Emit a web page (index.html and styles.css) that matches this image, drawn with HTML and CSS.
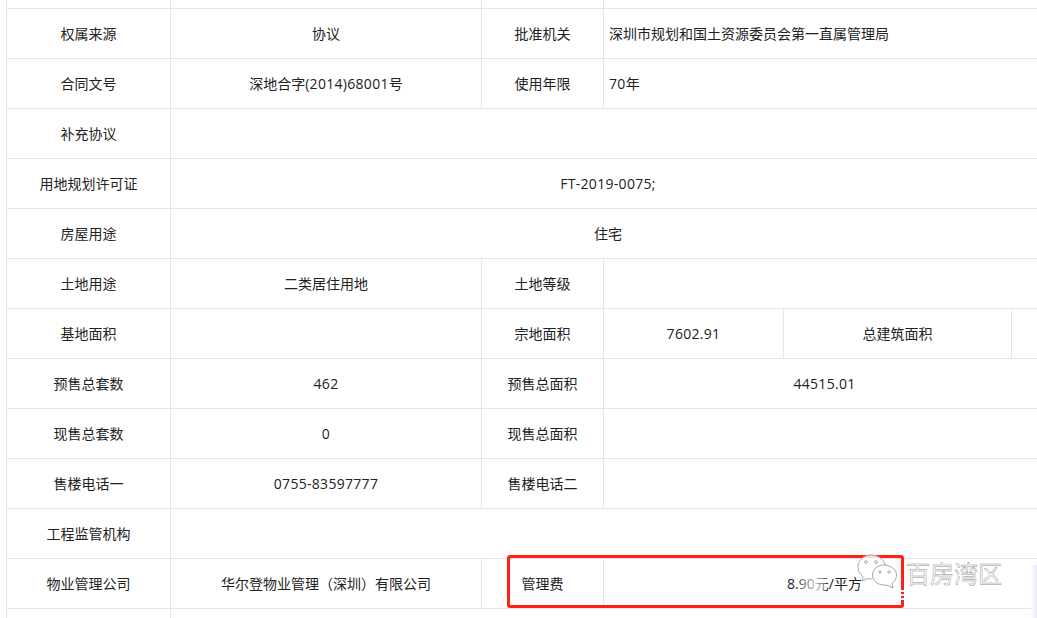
FILE: index.html
```html
<!DOCTYPE html>
<html lang="zh-CN">
<head>
<meta charset="utf-8">
<title>项目信息</title>
<link rel="stylesheet" href="styles.css">
</head>
<body>
<main class="sheet">
<table class="info">
<colgroup>
<col class="c1"><col class="c2"><col class="c3"><col class="c4"><col class="c5"><col class="c6">
</colgroup>
<tbody>
<tr class="cut"><td></td><td></td><td></td><td colspan="3"></td></tr>
<tr><td>权属来源</td><td>协议</td><td>批准机关</td><td colspan="3" class="left">深圳市规划和国土资源委员会第一直属管理局</td></tr>
<tr><td>合同文号</td><td>深地合字<span class="num">(2014)68001</span>号</td><td>使用年限</td><td colspan="3" class="left"><span class="num">70</span>年</td></tr>
<tr><td>补充协议</td><td colspan="5"></td></tr>
<tr><td>用地规划许可证</td><td colspan="5" class="num">FT-2019-0075;</td></tr>
<tr><td>房屋用途</td><td colspan="5">住宅</td></tr>
<tr><td>土地用途</td><td>二类居住用地</td><td>土地等级</td><td colspan="3"></td></tr>
<tr><td>基地面积</td><td></td><td>宗地面积</td><td class="num">7602.91</td><td>总建筑面积</td><td></td></tr>
<tr><td>预售总套数</td><td class="num">462</td><td>预售总面积</td><td colspan="3" class="num">44515.01</td></tr>
<tr><td>现售总套数</td><td class="num">0</td><td>现售总面积</td><td colspan="3"></td></tr>
<tr><td>售楼电话一</td><td class="num">0755-83597777</td><td>售楼电话二</td><td colspan="3"></td></tr>
<tr><td>工程监管机构</td><td colspan="5"></td></tr>
<tr><td>物业管理公司</td><td>华尔登物业管理（深圳）有限公司</td><td>管理费</td><td colspan="3">8.90元/平方</td></tr>
<tr><td></td><td colspan="5"></td></tr>
</tbody>
</table>
<div class="mark-box"></div>
<div class="wm-fade"></div>
<div class="wm-break"></div>
<div class="edge-shade"></div>
<div class="watermark">
<svg class="wx" viewBox="0 0 40 36" width="40" height="36" aria-hidden="true">
<path class="wx-glow" d="M14 1C6.500 1 1 6.500 1 13c0 4 2 7.500 5 9.500L5 27l5.500-2.500 4 .5c7 0 13-5 13-12S21.500 1 14 1z"/>
<path class="wx-line" d="M14 1C6.500 1 1 6.500 1 13c0 4 2 7.500 5 9.500L5 27l5.500-2.500 4 .5"/>
<path class="wx-line" d="M14 1c7 0 12.500 4 14 10"/>
<path class="wx-glow" d="M27 11c-6.500 0-11.500 4.500-11.500 10S20.500 31 27 31l4 .5 5 2.500-1-4.500c2.800-2 4.500-5 4.500-8.500C39.500 15.500 33.500 11 27 11z"/>
<path class="wx-line" d="M27 11c-6.500 0-11.500 4.500-11.500 10S20.500 31 27 31l4 .5 5 2.500-1-4.500c2.800-2 4.500-5 4.500-8.500C39.500 15.500 33.500 11 27 11z"/>
<circle class="wx-dot" cx="9" cy="8" r="1.400"/><circle class="wx-dot" cx="19" cy="8" r="1.400"/>
<circle class="wx-dot" cx="23" cy="18" r="1.200"/><circle class="wx-dot" cx="32" cy="18" r="1.200"/>
</svg>
<span class="wm-text">百房湾区</span>
</div>
</main>
</body>
</html>
```
FILE: styles.css
```css
* { box-sizing: border-box; }
html, body { margin: 0; padding: 0; background: #fff; overflow: hidden; }
body { width: 1037px; height: 618px; }
.sheet { position: relative; width: 1037px; height: 618px; overflow: hidden; padding-left: 6px; }
.info {
  border-collapse: collapse;
  table-layout: fixed;
  width: 1039px;
  font: 14px/20px "Open Sans", "Noto Sans CJK SC", "Liberation Sans", sans-serif;
  color: #222;
}
.c1 { width: 164px; }
.c2 { width: 311px; }
.c3 { width: 122px; }
.c4 { width: 180px; }
.c5 { width: 228px; }
.c6 { width: 34px; }
.info tr { height: 50px; }
.info tr.cut { height: 8px; }
.info td {
  border: 1px solid #e6e6e6;
  text-align: center;
  vertical-align: middle;
  padding: 2px 5px 0;
  overflow: hidden;
  white-space: nowrap;
}
.info tr.cut td { border-top: 0; padding: 0; }
.info td.left { text-align: left; }
.num { letter-spacing: .3px; }
.mark-box {
  position: absolute;
  left: 507px;
  top: 555px;
  width: 397px;
  height: 53px;
  border: 3px solid #ff2116;
  border-radius: 3px;
}
.wm-fade {
  position: absolute;
  left: 800px;
  top: 575px;
  width: 26px;
  height: 18px;
  background: linear-gradient(90deg, rgba(255, 255, 255, .25), rgba(255, 255, 255, .7) 60%, rgba(255, 255, 255, .3));
}
.wm-break {
  position: absolute;
  left: 900px;
  top: 590px;
  width: 4px;
  height: 11px;
  background: repeating-linear-gradient(#fff 0 2px, transparent 2px 4px);
}
.edge-shade {
  position: absolute;
  left: 1031px;
  top: 565px;
  width: 6px;
  height: 53px;
  border-top-left-radius: 4px;
  background: linear-gradient(90deg, #fff, #e9e9f5);
}
.watermark {
  position: absolute;
  left: 857px;
  top: 554px;
  display: flex;
  align-items: flex-start;
  gap: 9px;
}
.wx { display: block; }
.wx-glow { fill: rgba(255, 255, 255, .82); stroke: none; }
.wx-line { fill: none; stroke: #a6a6a6; stroke-width: 1; }
.wx-dot { fill: none; stroke: #8a8a8a; stroke-width: .7; }
.wm-text {
  font: 24px/28px "Noto Sans CJK SC", sans-serif;
  color: #fff;
  -webkit-text-stroke: .45px #8f8f8f;
  margin-top: 5px;
}
```
